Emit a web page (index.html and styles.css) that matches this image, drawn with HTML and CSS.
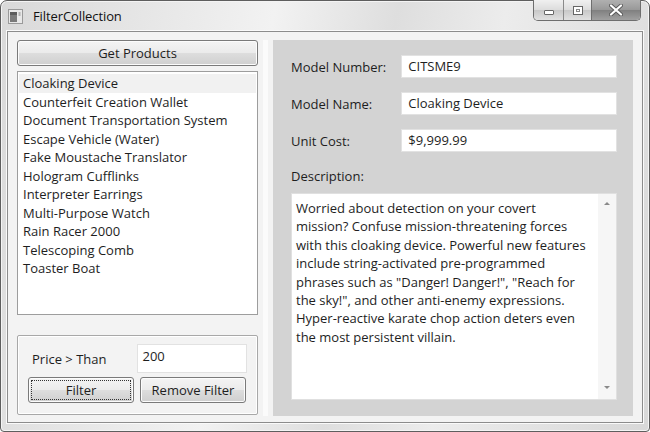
FILE: index.html
```html
<!DOCTYPE html>
<html>
<head>
<meta charset="utf-8">
<link rel="stylesheet" href="styles.css">
</head>
<body>
<div class="window">
  <div class="titlebar">
    <svg class="app-icon" width="15" height="15" viewBox="0 0 15 15">
      <rect x="0.5" y="0.5" width="14" height="14" fill="#e8e8e8" stroke="#9a9a9a"/>
      <rect x="2" y="3" width="7" height="10" fill="#7a7a7a"/>
      <rect x="2" y="3" width="7" height="3" fill="#5a5a5a"/>
      <rect x="10.5" y="3" width="2" height="4" fill="#b0b0b0"/>
    </svg>
    <span class="title">FilterCollection</span>
    <div class="caption">
      <div class="cap cap-min"><span class="min-glyph"></span></div>
      <div class="cap cap-max"><span class="max-glyph"></span></div>
      <div class="cap cap-close">
        <svg width="14" height="12" viewBox="0 0 14 12">
          <path d="M2 1.5 L12 10.5 M12 1.5 L2 10.5" stroke="#5a5a5a" stroke-width="4" stroke-linecap="round"/>
          <path d="M2 1.5 L12 10.5 M12 1.5 L2 10.5" stroke="#ffffff" stroke-width="2.2" stroke-linecap="round"/>
        </svg>
      </div>
    </div>
  </div>
  <div class="client">
    <div class="left">
      <button class="btn btn-get">Get Products</button>
      <div class="listbox">
        <div class="item selected">Cloaking Device</div>
        <div class="item">Counterfeit Creation Wallet</div>
        <div class="item">Document Transportation System</div>
        <div class="item">Escape Vehicle (Water)</div>
        <div class="item">Fake Moustache Translator</div>
        <div class="item">Hologram Cufflinks</div>
        <div class="item">Interpreter Earrings</div>
        <div class="item">Multi-Purpose Watch</div>
        <div class="item">Rain Racer 2000</div>
        <div class="item">Telescoping Comb</div>
        <div class="item">Toaster Boat</div>
      </div>
      <div class="group">
        <div class="price-row">
          <span class="price-label">Price &gt; Than</span>
          <div class="tb tb-price">200</div>
        </div>
        <div class="btn-row">
          <button class="btn btn-filter"><span class="focus">Filter</span></button>
          <button class="btn btn-remove">Remove Filter</button>
        </div>
      </div>
    </div>
    <div class="splitter"></div>
    <div class="details">
      <div class="field">
        <span class="label">Model Number:</span>
        <div class="tb">CITSME9</div>
      </div>
      <div class="field">
        <span class="label">Model Name:</span>
        <div class="tb">Cloaking Device</div>
      </div>
      <div class="field">
        <span class="label">Unit Cost:</span>
        <div class="tb">$9,999.99</div>
      </div>
      <div class="desc-label">Description:</div>
      <div class="desc">
        <div class="desc-text">Worried about detection on your covert<br>mission? Confuse mission-threatening forces<br>with this cloaking device. Powerful new features<br>include string-activated pre-programmed<br>phrases such as "Danger! Danger!", "Reach for<br>the sky!", and other anti-enemy expressions.<br>Hyper-reactive karate chop action deters even<br>the most persistent villain.</div>
        <div class="vscroll">
          <span class="arrow-up"></span>
          <span class="arrow-down"></span>
        </div>
      </div>
    </div>
  </div>
</div>
</body>
</html>
```
FILE: styles.css
```css
* { box-sizing: border-box; }
html, body { margin: 0; padding: 0; background: #ffffff; }
body {
  font-family: "Open Sans", "Noto Sans", sans-serif;
  font-size: 13px;
  color: #1e1e1e;
}
.window {
  width: 650px;
  height: 432px;
  border: 1px solid #5e5e5e;
  border-radius: 7px 7px 4px 4px;
  background: linear-gradient(100deg, #d9d9d9 0%, #e6e6e6 20%, #f2f2f2 38%, #dedede 55%, #ececec 70%, #d8d8d8 100%);
  display: flex;
  flex-direction: column;
  box-shadow: inset 0 0 0 1px #f4f4f4;
}
.titlebar {
  height: 29px;
  display: flex;
  align-items: center;
  padding-left: 7px;
  position: relative;
}
.app-icon { margin-right: 10px; margin-top: 1px; }
.title {
  font-size: 13px;
  color: #111;
  letter-spacing: -0.1px;
}
.caption {
  position: absolute;
  top: -1px;
  right: 8px;
  display: flex;
  height: 21px;
  border: 1px solid #6e6e6e;
  border-top: none;
  border-radius: 0 0 5px 5px;
  overflow: hidden;
}
.cap {
  display: flex;
  align-items: center;
  justify-content: center;
  height: 100%;
}
.cap-min {
  width: 30px;
  border-right: 1px solid #8a8a8a;
  background: linear-gradient(#f0f0f0, #dcdcdc 50%, #c8c8c8 51%, #e0e0e0);
}
.cap-max {
  width: 28px;
  border-right: 1px solid #6e6e6e;
  background: linear-gradient(#f0f0f0, #dcdcdc 50%, #c8c8c8 51%, #e0e0e0);
}
.cap-close {
  width: 48px;
  background: linear-gradient(#b0b0b0, #989898 50%, #808080 51%, #a0a0a0);
}
.min-glyph {
  width: 10px;
  height: 5px;
  margin-top: 4px;
  border: 1px solid #666;
  border-radius: 1px;
  background: #fff;
}
.max-glyph {
  width: 10px;
  height: 9px;
  border: 1px solid #666;
  background: #fff;
  box-shadow: inset 0 0 0 2px #fff, inset 0 0 0 3px #888;
}
.client {
  margin: 1px 6px 8px 6px;
  flex: 1;
  border: 1px solid #8c8c8c;
  box-shadow: 0 0 0 1px #fafafa;
  background: #f3f3f3;
  display: flex;
  padding: 8px 8px 6px 9px;
}
.left {
  width: 241px;
  display: flex;
  flex-direction: column;
}
.btn {
  font-family: "Open Sans", "Noto Sans", sans-serif;
  font-size: 13px;
  color: #1e1e1e;
  border: 1px solid #7a7a7a;
  border-radius: 3px;
  background: linear-gradient(#f4f4f4, #ebebeb 48%, #dddddd 52%, #cfcfcf);
  box-shadow: inset 0 0 0 1px #fcfcfc;
  padding: 0;
  margin: 0;
}
.btn-get { height: 26px; width: 100%; }
.listbox {
  margin-top: 5px;
  height: 244px;
  border: 1px solid #9d9d9d;
  background: #ffffff;
  padding: 2px 1px 1px 1px;
}
.item {
  height: 18.5px;
  line-height: 18.5px;
  padding-left: 4px;
  white-space: nowrap;
}
.item.selected { background: #f1f1f1; }
.group {
  margin-top: 20px;
  height: 80px;
  border: 1px solid #a8a8a8;
  box-shadow: inset 0 0 0 1px #ffffff;
  border-radius: 2px;
  padding: 8px 10px 0 10px;
}
.price-row {
  display: flex;
  align-items: center;
  height: 29px;
}
.price-label {
  width: 109px;
  padding-left: 4px;
}
.tb {
  background: #ffffff;
  border: 1px solid #e2e2e2;
  height: 23px;
  line-height: 21px;
  padding-left: 6px;
}
.tb-price { width: 111px; height: 29px; line-height: 23px; padding-left: 5px; }
.btn-row {
  display: flex;
  gap: 6px;
  margin-top: 4px;
}
.btn-filter, .btn-remove { height: 26px; width: 106px; }
.btn-filter { padding: 2px; }
.focus {
  display: flex;
  align-items: center;
  justify-content: center;
  width: 100%;
  height: 100%;
  border: 1px dotted #333;
}
.splitter {
  width: 15px;
  background: linear-gradient(90deg, #f3f3f3 0, #f3f3f3 5px, #fbfbfb 5px, #fbfbfb 10px, #f3f3f3 10px);
}
.details {
  width: 360px;
  background: #d3d3d3;
  padding: 15px 16px 16px 18px;
  display: flex;
  flex-direction: column;
}
.field {
  display: flex;
  align-items: center;
  height: 23px;
  margin-bottom: 14px;
}
.label {
  width: 111px;
}
.field .tb { width: 217px; }
.desc-label {
  margin-top: 1px;
  height: 26px;
  line-height: 18px;
}
.desc {
  width: 326px;
  flex: 1;
  background: #ffffff;
  border: 1px solid #e0e0e0;
  display: flex;
}
.desc-text {
  flex: 1;
  padding: 5px 0 0 4px;
  line-height: 18.4px;
  white-space: nowrap;
}
.vscroll {
  width: 18px;
  background: #f6f6f6;
  position: relative;
}
.arrow-up, .arrow-down {
  position: absolute;
  left: 6px;
  width: 0;
  height: 0;
  border-left: 3px solid transparent;
  border-right: 3px solid transparent;
}
.arrow-up { top: 8px; border-bottom: 3px solid #8a8a8a; }
.arrow-down { bottom: 10px; border-top: 3px solid #8a8a8a; }
```
